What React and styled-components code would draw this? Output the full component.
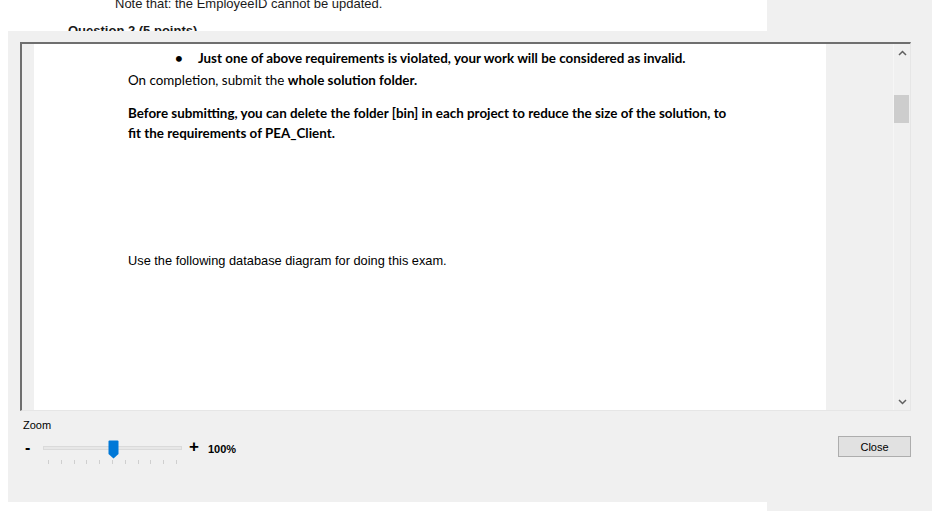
import React from "react";
import styled, { createGlobalStyle } from "styled-components";

const Global = createGlobalStyle`
  html, body { margin: 0; padding: 0; background: #ffffff; overflow: hidden; }
  * { box-sizing: border-box; }
`;

const Screen = styled.div`
  position: relative;
  width: 932px;
  height: 511px;
  display: flex;
  overflow: hidden;
`;

const BackDoc = styled.div`
  width: 767px;
  background: #ffffff;
  display: flex;
  flex-direction: column;
  font-family: "Liberation Sans", Arial, sans-serif;
  color: #1a1a1a;
`;

const Note = styled.div`
  margin-top: -4px;
  padding-left: 115px;
  font-size: 13px;
  line-height: 15px;
`;

const QuestionHeading = styled.div`
  margin-top: 12px;
  padding-left: 68px;
  font-size: 13px;
  line-height: 15px;
  font-weight: bold;
`;

const SideGutter = styled.div`
  flex: 1;
  background: #f0f0f0;
`;

const Dialog = styled.div`
  position: absolute;
  left: 8px;
  top: 31px;
  right: 0;
  bottom: 9px;
  background: #f0f0f0;
  display: flex;
  flex-direction: column;
  padding: 11px 21px 0 12px;
`;

const Viewer = styled.div`
  height: 369px;
  display: flex;
  border-top: 2px solid #6f6f6f;
  border-left: 2px solid #6f6f6f;
  border-right: 1px solid #e6e6e6;
  border-bottom: 1px solid #e6e6e6;
  box-shadow: inset 1px 1px 0 #a0a0a0;
`;

const PageMargin = styled.div`
  width: 12px;
  background: #f0f0f0;
`;

const Page = styled.div`
  width: 792px;
  background: #ffffff;
  padding-top: 4px;
  color: #000;
  font-family: Lato, "Liberation Sans", sans-serif;
  font-size: 13.4px;
  line-height: 20px;
`;

const Gutter = styled.div`
  width: 67px;
  background: #f0f0f0;
`;

const ScrollBar = styled.div`
  width: 17px;
  background: #f0f0f0;
  display: flex;
  flex-direction: column;
  border-left: 1px solid #f6f6f6;
`;

const ScrollButton = styled.div`
  height: 17px;
  display: flex;
  align-items: center;
  justify-content: center;
`;

const ScrollTrack = styled.div`
  flex: 1;
  padding: 34px 1px 0 0;
`;

const ScrollThumb = styled.div`
  height: 28px;
  background: #cdcdcd;
`;

const BulletLine = styled.div`
  display: flex;
  padding-left: 141px;
  font-weight: bold;
`;

const Bullet = styled.span`
  width: 23px;
  font-weight: bold;
`;

const Para = styled.div`
  padding-left: 94px;
  margin-top: ${(p) => p.$gap || 0}px;
  font-weight: ${(p) => (p.$bold ? "bold" : "normal")};
  font-family: ${(p) =>
    p.$arial ? '"Liberation Sans", Arial, sans-serif' : 'Lato, "Liberation Sans", sans-serif'};
  font-size: ${(p) => (p.$arial ? "12.8px" : "inherit")};
`;

const Controls = styled.div`
  margin-top: 7px;
  display: flex;
  justify-content: space-between;
  align-items: flex-start;
  font-family: "Liberation Sans", Arial, sans-serif;
  color: #000;
`;

const ZoomGroup = styled.div`
  padding-left: 3px;
  display: flex;
  flex-direction: column;
`;

const ZoomLabel = styled.div`
  font-size: 11px;
  line-height: 14px;
`;

const SliderRow = styled.div`
  margin-top: 6px;
  height: 26px;
  display: flex;
  align-items: flex-start;
`;

const Minus = styled.div`
  width: 20px;
  padding-left: 2px;
  font-size: 16px;
  font-weight: bold;
  line-height: 20px;
`;

const SliderBox = styled.div`
  position: relative;
  width: 139px;
  height: 26px;
`;

const Track = styled.div`
  margin-top: 8px;
  height: 4px;
  background: #e7e7e7;
  border: 1px solid #dadada;
`;

const Ticks = styled.div`
  margin-top: 10px;
  padding: 0 5px;
  display: flex;
  justify-content: space-between;
`;

const Tick = styled.div`
  width: 1px;
  height: 4px;
  background: #cfcfcf;
`;

const Thumb = styled.svg`
  position: absolute;
  left: 65px;
  top: 2px;
`;

const Plus = styled.div`
  margin-left: 7px;
  width: 19px;
  font-size: 17px;
  font-weight: bold;
  line-height: 18px;
`;

const Percent = styled.div`
  font-size: 11px;
  font-weight: bold;
  line-height: 22px;
`;

const CloseButton = styled.button`
  margin-top: 18px;
  width: 73px;
  height: 21px;
  background: #e1e1e1;
  border: 1px solid #adadad;
  font-family: "Liberation Sans", Arial, sans-serif;
  font-size: 11px;
  color: #000;
  padding: 0;
`;

const Chevron = ({ up }) => (
  <svg width="9" height="6" viewBox="0 0 9 6">
    <path
      d={up ? "M1 5 L4.5 1.5 L8 5" : "M1 1 L4.5 4.5 L8 1"}
      fill="none"
      stroke="#606060"
      strokeWidth="1.5"
    />
  </svg>
);

export default function App() {
  const ticks = Array.from({ length: 11 });
  return (
    <>
      <Global />
      <Screen>
        <BackDoc>
          <Note>Note that: the EmployeeID cannot be updated.</Note>
          <QuestionHeading>Question 2 (5 points)</QuestionHeading>
        </BackDoc>
        <SideGutter />
        <Dialog>
          <Viewer>
            <PageMargin />
            <Page>
              <BulletLine>
                <Bullet>•</Bullet>
                <span>
                  Just one of above requirements is violated, your work will be considered as invalid.
                </span>
              </BulletLine>
              <Para $gap={2}>
                On completion, submit the <b>whole solution folder.</b>
              </Para>
              <Para $gap={13} $bold>
                Before submitting, you can delete the folder [bin] in each project to reduce the size of the solution, to
                <br />
                fit the requirements of PEA_Client.
              </Para>
              <Para $gap={108} $arial>
                Use the following database diagram for doing this exam.
              </Para>
            </Page>
            <Gutter />
            <ScrollBar>
              <ScrollButton>
                <Chevron up />
              </ScrollButton>
              <ScrollTrack>
                <ScrollThumb />
              </ScrollTrack>
              <ScrollButton>
                <Chevron />
              </ScrollButton>
            </ScrollBar>
          </Viewer>
          <Controls>
            <ZoomGroup>
              <ZoomLabel>Zoom</ZoomLabel>
              <SliderRow>
                <Minus>-</Minus>
                <SliderBox>
                  <Track />
                  <Ticks>
                    {ticks.map((_, i) => (
                      <Tick key={i} />
                    ))}
                  </Ticks>
                  <Thumb width="11" height="19" viewBox="0 0 11 19">
                    <path d="M0.5 1.5 Q0.5 0.5 1.5 0.5 L9.5 0.5 Q10.5 0.5 10.5 1.5 L10.5 14 L5.5 18.5 L0.5 14 Z" fill="#0078d7" />
                  </Thumb>
                </SliderBox>
                <Plus>+</Plus>
                <Percent>100%</Percent>
              </SliderRow>
            </ZoomGroup>
            <CloseButton>Close</CloseButton>
          </Controls>
        </Dialog>
      </Screen>
    </>
  );
}
